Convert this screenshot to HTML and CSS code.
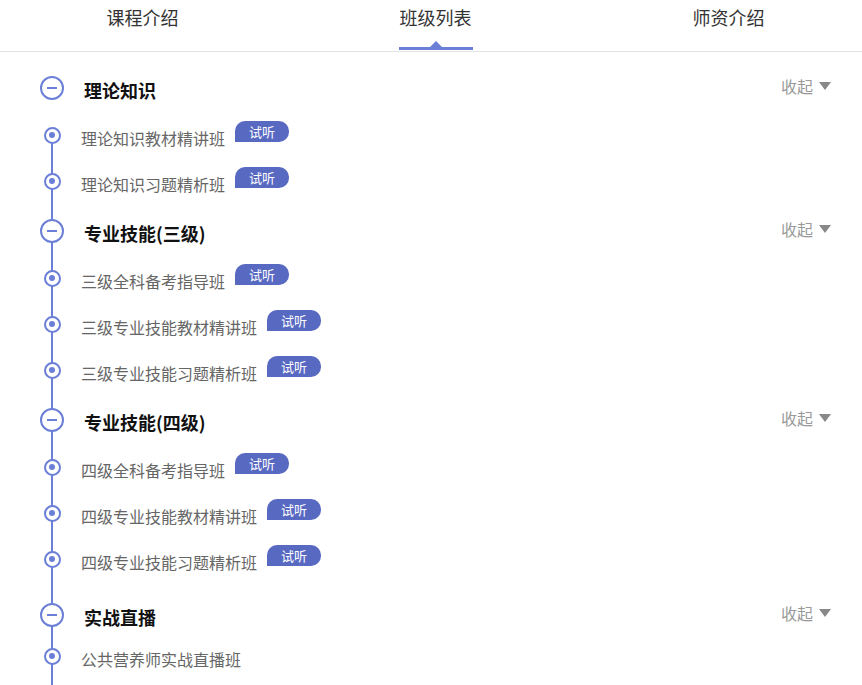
FILE: index.html
```html
<!DOCTYPE html>
<html lang="zh-CN">
<head>
  <meta charset="UTF-8" />
  <meta name="viewport" content="width=device-width, initial-scale=1.0" />
  <title>班级列表</title>
  <link rel="stylesheet" href="styles.css">
</head>
<body>
  <!-- Tabs -->
  <div class="tabs">
    <div class="tab"><span>课程介绍</span></div>
    <div class="tab active"><span>班级列表</span></div>
    <div class="tab"><span>师资介绍</span></div>
  </div>

  <!-- Class list -->
  <div class="timeline">
    <div class="group">
      <div class="group-head">
        <i class="ring"></i>
        <h3>理论知识</h3>
        <a class="fold">收起<b class="caret"></b></a>
      </div>
      <div class="item"><i class="dot"></i><span class="name">理论知识教材精讲班</span><em class="badge">试听</em></div>
      <div class="item"><i class="dot"></i><span class="name">理论知识习题精析班</span><em class="badge">试听</em></div>
    </div>

    <div class="group">
      <div class="group-head">
        <i class="ring"></i>
        <h3>专业技能(三级)</h3>
        <a class="fold">收起<b class="caret"></b></a>
      </div>
      <div class="item"><i class="dot"></i><span class="name">三级全科备考指导班</span><em class="badge">试听</em></div>
      <div class="item"><i class="dot"></i><span class="name">三级专业技能教材精讲班</span><em class="badge">试听</em></div>
      <div class="item"><i class="dot"></i><span class="name">三级专业技能习题精析班</span><em class="badge">试听</em></div>
    </div>

    <div class="group">
      <div class="group-head">
        <i class="ring"></i>
        <h3>专业技能(四级)</h3>
        <a class="fold">收起<b class="caret"></b></a>
      </div>
      <div class="item"><i class="dot"></i><span class="name">四级全科备考指导班</span><em class="badge">试听</em></div>
      <div class="item"><i class="dot"></i><span class="name">四级专业技能教材精讲班</span><em class="badge">试听</em></div>
      <div class="item"><i class="dot"></i><span class="name">四级专业技能习题精析班</span><em class="badge">试听</em></div>
    </div>

    <div class="group live">
      <div class="group-head">
        <i class="ring"></i>
        <h3>实战直播</h3>
        <a class="fold">收起<b class="caret"></b></a>
      </div>
      <div class="item"><i class="dot"></i><span class="name">公共营养师实战直播班</span></div>
    </div>
  </div>
</body>
</html>
```

FILE: styles.css
```css
/* ---------- Base ---------- */
*, *::before, *::after { box-sizing: border-box; margin: 0; padding: 0; }
body {
  font-family: "Noto Sans CJK SC", "Noto Sans", sans-serif;
  background: #fff;
  color: #333;
  overflow: hidden;
}

/* ---------- Tabs ---------- */
.tabs {
  display: grid;
  grid-template-columns: 293px 293px 293px;
  margin-left: -4px;
  height: 52px;
  border-bottom: 1px solid #e3e3e3;
}
.tab { text-align: center; font-size: 18px; color: #333; }
.tab span { display: inline-block; position: relative; height: 51px; line-height: 34px; }
.tab.active span::after {
  content: "";
  position: absolute;
  left: -1px; right: -1px; bottom: 1px;
  height: 3px;
  background: #6b7fd7;
}
.tab.active span::before {
  content: "";
  position: absolute;
  left: 50%; bottom: 4px;
  margin-left: -6px;
  border-left: 6px solid transparent;
  border-right: 6px solid transparent;
  border-bottom: 6px solid #6b7fd7;
}

/* ---------- Timeline ---------- */
.timeline { position: relative; padding: 12px 31px 20px 40px; }
.timeline::before {
  content: "";
  position: absolute;
  left: 51px; top: 88px; bottom: 0;
  width: 2px;
  background: #6b7fd7;
}
.group + .group { margin-top: 3px; }

.group-head { display: flex; align-items: center; height: 48px; position: relative; }
.live { padding-top: 6px; }
.live .group-head { margin-bottom: -6px; }
.ring {
  width: 24px; height: 24px;
  border: 2px solid #6b7fd7;
  border-radius: 50%;
  background: #fff;
  display: flex; align-items: center; justify-content: center;
  flex-shrink: 0;
}
.ring::before { content: ""; width: 10px; height: 2px; background: #6b7fd7; }
.group-head h3 {
  margin-left: 20px;
  padding-top: 4px;
  font-size: 18px; font-weight: 700; color: #111;
}
.fold {
  margin-left: auto;
  font-size: 16px; color: #999;
  display: flex; align-items: center;
  padding-bottom: 4px;
}
.caret {
  margin-left: 6px;
  border-left: 6px solid transparent;
  border-right: 6px solid transparent;
  border-top: 8px solid #888;
}

/* ---------- Items ---------- */
.item { display: flex; align-items: center; height: 46px; position: relative; }
.dot {
  width: 17px; height: 17px;
  margin-left: 3.5px;
  border: 2px solid #6b7fd7;
  border-radius: 50%;
  background: #fff;
  display: flex; align-items: center; justify-content: center;
  flex-shrink: 0;
}
.dot::before { content: ""; width: 6px; height: 6px; border-radius: 50%; background: #6b7fd7; }
.name { margin-left: 20.5px; padding-top: 5px; font-size: 16px; color: #666; }
.badge {
  margin-left: 10px; margin-bottom: 7px;
  width: 54px; height: 21px;
  border-radius: 10px 10px 10px 0;
  background: #5869c2;
  color: #fff;
  font-style: normal; font-size: 13px;
  display: flex; align-items: center; justify-content: center;
}
```
